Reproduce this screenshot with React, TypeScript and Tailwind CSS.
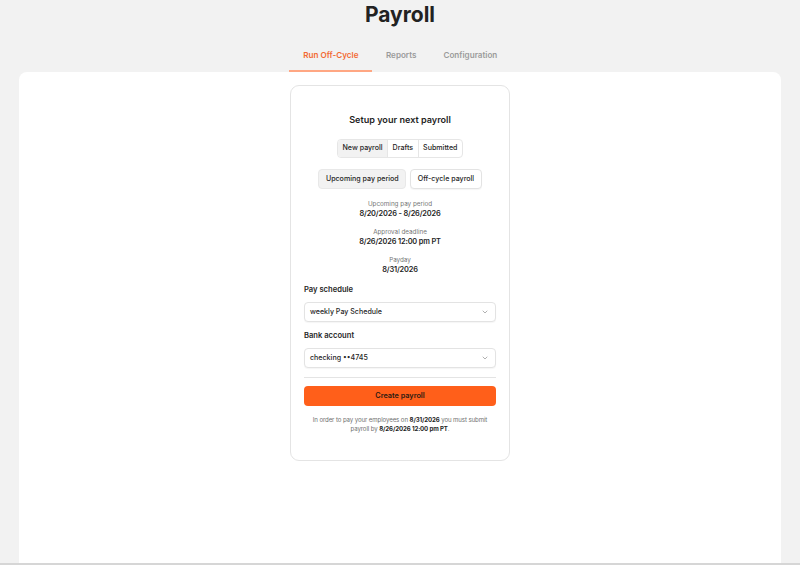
import { ChevronDown } from "lucide-react";

const tabs = ["Run Off-Cycle", "Reports", "Configuration"];
const segments = ["New payroll", "Drafts", "Submitted"];

const details = [
  { label: "Upcoming pay period", value: "8/20/2026 - 8/26/2026" },
  { label: "Approval deadline", value: "8/26/2026 12:00 pm PT" },
  { label: "Payday", value: "8/31/2026" },
];

function SelectBox({ value }: { value: string }) {
  return (
    <div className="flex h-[20px] items-center justify-between rounded-[4px] border border-[#e3e3e3] bg-white pl-[5px] pr-[6px] shadow-[0_1px_1px_rgba(0,0,0,0.04)]">
      <span className="text-[7.1px] font-medium text-[#262626]">{value}</span>
      <ChevronDown className="h-[8px] w-[8px] text-[#8a8a8a]" strokeWidth={2} />
    </div>
  );
}

export default function App() {
  return (
    <div className="flex h-[565px] flex-col bg-[#f2f2f2] font-['Inter',sans-serif] text-[#1f1f1f]">
      <h1 className="pt-[2px] text-center text-[21px] font-bold leading-[26px] text-[#222]">Payroll</h1>

      <div className="mt-[12px] flex justify-center">
        {tabs.map((t, i) => (
          <div
            key={t}
            className={
              i === 0
                ? "flex h-[32px] items-center border-b-2 border-[#ffa783] px-[14px] text-[8.1px] font-semibold text-[#f26a33]"
                : "flex h-[32px] items-center border-b-2 border-transparent px-[13.5px] text-[8.1px] font-semibold text-[#9b9b9b]"
            }
          >
            {t}
          </div>
        ))}
      </div>

      <div className="mx-[19px] flex-1 rounded-t-[8px] bg-white pt-[13px]">
        <div className="mx-auto w-[220px] rounded-[9px] border border-[#e4e4e4] px-[13px] pb-[27px] pt-[27px]">
          <h2 className="text-center text-[9.1px] font-semibold leading-[14px]">Setup your next payroll</h2>

          <div className="mt-[12px] flex justify-center">
            <div className="flex h-[19px] overflow-hidden rounded-[4px] border border-[#e6e6e6]">
              {segments.map((s, i) => (
                <div
                  key={s}
                  className={
                    i === 0
                      ? "flex items-center bg-[#f2f2f2] px-[4.5px] text-[7.1px] font-medium"
                      : "flex items-center border-l border-[#e6e6e6] px-[4.5px] text-[7.1px] font-medium"
                  }
                >
                  {s}
                </div>
              ))}
            </div>
          </div>

          <div className="mt-[11px] flex justify-center gap-[4px]">
            <div className="flex h-[20px] items-center rounded-[4px] border border-[#e8e8e8] bg-[#f2f2f2] px-[6.5px] text-[7.1px] font-medium">
              Upcoming pay period
            </div>
            <div className="flex h-[20px] items-center rounded-[4px] border border-[#e3e3e3] bg-white px-[6.5px] text-[7.1px] font-medium shadow-[0_1px_1px_rgba(0,0,0,0.04)]">
              Off-cycle payroll
            </div>
          </div>

          <div className="mt-[11px] flex flex-col gap-[9px]">
            {details.map((d) => (
              <div key={d.label} className="text-center">
                <div className="text-[6.3px] leading-[9px] text-[#767676]">{d.label}</div>
                <div className="text-[7.4px] font-semibold leading-[10px] tracking-[-0.15px]">{d.value}</div>
              </div>
            ))}
          </div>

          <div className="mt-[9px] text-[7.6px] font-semibold leading-[12px]">Pay schedule</div>
          <div className="mt-[6px]">
            <SelectBox value="weekly Pay Schedule" />
          </div>

          <div className="mt-[8px] text-[7.6px] font-semibold leading-[12px]">Bank account</div>
          <div className="mt-[6px]">
            <SelectBox value="checking ••4745" />
          </div>

          <div className="mt-[9px] h-px bg-[#e4e4e4]" />

          <button className="mt-[8px] flex h-[20px] w-full items-center justify-center rounded-[4px] bg-[#ff5f1a] text-[7.3px] font-semibold text-[#2a1a12]">
            Create payroll
          </button>

          <p className="mt-[9px] text-center text-[6.1px] leading-[9px] tracking-[-0.1px] text-[#6f6f6f]">
            In order to pay your employees on <span className="font-bold text-[#1f1f1f]">8/31/2026</span> you must submit
            <br />
            payroll by <span className="font-bold text-[#1f1f1f]">8/26/2026 12:00 pm PT</span>.
          </p>
        </div>
      </div>
      <div className="h-[2px] bg-[#d6d6d6]" />
    </div>
  );
}
